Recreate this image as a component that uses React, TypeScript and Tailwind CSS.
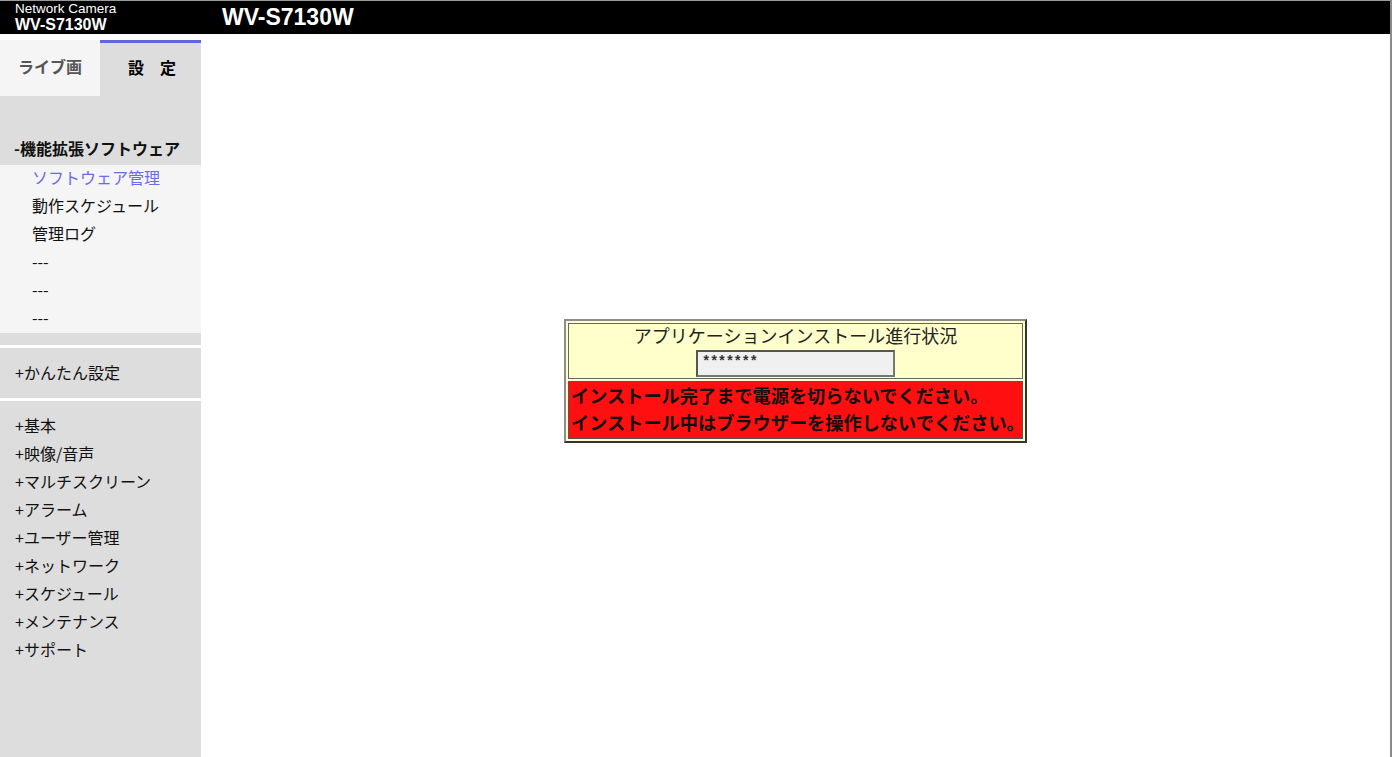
import React from "react";

const jp = { fontFamily: '"Noto Sans CJK JP", "Noto Sans", sans-serif' };
const arial = { fontFamily: '"Liberation Sans", Arial, sans-serif' };
const mono = { fontFamily: '"Liberation Mono", "Courier New", monospace' };

const subItems = [
  { label: "ソフトウェア管理", active: true },
  { label: "動作スケジュール" },
  { label: "管理ログ" },
  { label: "---" },
  { label: "---" },
  { label: "---" },
];

const mainItems = [
  "+基本",
  "+映像/音声",
  "+マルチスクリーン",
  "+アラーム",
  "+ユーザー管理",
  "+ネットワーク",
  "+スケジュール",
  "+メンテナンス",
  "+サポート",
];

export default function App() {
  return (
    <div className="w-[1392px] h-[757px] overflow-hidden bg-white flex flex-col border-r-2 border-[#8a8a8a]" style={jp}>
      {/* header */}
      <div className="h-[34px] shrink-0 bg-black border-t border-[#9a9a9a] flex items-stretch text-white">
        <div className="w-[201px] pl-[15px] flex flex-col" style={arial}>
          <div className="text-[13.5px] leading-[14px] mt-[1px]">Network Camera</div>
          <div className="text-[16px] leading-[17px] font-bold">WV-S7130W</div>
        </div>
        <div className="pl-[21px] text-[23px] font-bold leading-[32px]" style={arial}>
          WV-S7130W
        </div>
      </div>

      <div className="flex flex-1 min-h-0">
        {/* sidebar */}
        <div className="w-[201px] shrink-0 flex flex-col pt-[6px]">
          <div className="flex h-[56px] shrink-0">
            <div className="w-[100px] bg-[#f5f5f5] flex items-center pl-[18px] pb-[5px] font-bold text-[16px] text-[#555]">
              ライブ画
            </div>
            <div className="w-[101px] bg-[#dddddd] border-t-[3px] border-[#6464e6] flex items-center pl-[28px] pb-[6px] font-bold text-[16px] text-black">
              設　定
            </div>
          </div>
          <div className="bg-[#dddddd] h-[41px] shrink-0" />
          <div className="bg-[#dddddd] h-[28px] shrink-0 flex items-center pl-[14px] pb-[6px] font-bold text-[16px] text-[#111]">
            -機能拡張ソフトウェア
          </div>
          <div className="bg-[#f5f5f5] shrink-0 flex flex-col">
            {subItems.map((it, i) => (
              <div
                key={i}
                className={`h-[28px] flex items-center pl-[32px] pb-[4px] text-[16px] ${it.active ? "text-[#6a6af0]" : "text-[#111]"}`}
              >
                {it.label}
              </div>
            ))}
          </div>
          <div className="bg-[#dddddd] h-[12px] shrink-0" />
          <div className="bg-white h-[3px] shrink-0" />
          <div className="bg-[#dddddd] h-[50px] shrink-0 flex items-center pl-[15px] pb-[3px] text-[16px] text-[#111]">
            +かんたん設定
          </div>
          <div className="bg-white h-[3px] shrink-0" />
          <div className="bg-[#dddddd] flex-1 pt-[10px] flex flex-col">
            {mainItems.map((t, i) => (
              <div key={i} className="h-[28.1px] flex items-center pl-[15px] pb-[1px] text-[16px] text-[#111]">
                {t}
              </div>
            ))}
          </div>
        </div>

        {/* main */}
        <div className="flex-1 flex justify-center items-start pt-[285px]">
          <div className="w-[463px] border-2 border-t-[#8c8c8c] border-l-[#8c8c8c] border-r-[#333] border-b-[#333] bg-[#ffffcc] p-[2px] flex flex-col gap-[2px]">
            <div className="border border-[#666] h-[56px] flex flex-col items-center">
              <div className="text-[18px] leading-[26px] -mt-[2px] mb-[2px] text-[#222] whitespace-nowrap">アプリケーションインストール進行状況</div>
              <div className="w-[199px] h-[27px] bg-[#f0f0f0] border-2 border-t-[#555] border-l-[#555] border-r-[#777] border-b-[#777] text-[14px] leading-[14px] pl-[4px] pt-[3px] text-[#333] font-bold tracking-[-0.5px]" style={mono}>
                *******
              </div>
            </div>
            <div className="border border-[#555] bg-[#ff0f0f] h-[58px] pl-[2px] font-bold text-[18.2px] leading-[27px] text-[#111] whitespace-nowrap">
              <div>インストール完了まで電源を切らないでください。</div>
              <div>インストール中はブラウザーを操作しないでください。</div>
            </div>
          </div>
        </div>
      </div>
    </div>
  );
}
